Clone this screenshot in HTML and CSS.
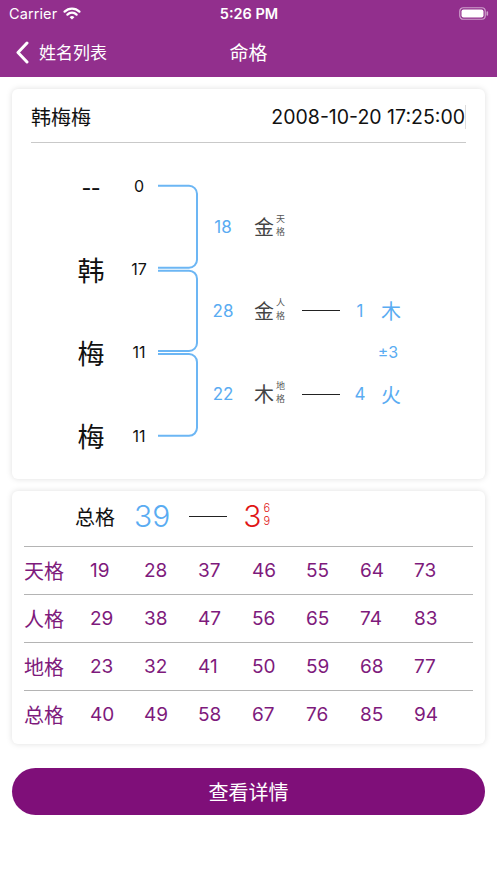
FILE: index.html
```html
<!DOCTYPE html>
<html lang="zh">
<head>
<meta charset="utf-8">
<title>命格</title>
<link rel="stylesheet" href="styles.css">
</head>
<body>
<header class="topbar">
  <div class="status">
    <div class="st-left">
      <span class="carrier">Carrier</span>
      <svg class="wifi" width="18" height="14" viewBox="0 0 18 14">
        <path d="M1.6 5.6 A10.5 10.5 0 0 1 16.4 5.6" stroke="#fff" stroke-width="2.3" fill="none" stroke-linecap="round"/>
        <path d="M4.4 8.6 A6.5 6.5 0 0 1 13.6 8.6" stroke="#fff" stroke-width="2.3" fill="none" stroke-linecap="round"/>
        <path d="M9 13.6 L6.6 11.2 A3.4 3.4 0 0 1 11.4 11.2 Z" fill="#fff"/>
      </svg>
    </div>
    <div class="st-time">5:26 PM</div>
    <div class="st-right">
      <svg width="30" height="13" viewBox="0 0 30 13">
        <rect x="0.75" y="0.75" width="25.5" height="11.5" rx="3.5" fill="none" stroke="rgba(255,255,255,0.55)" stroke-width="1.2"/>
        <rect x="2.5" y="2.5" width="22" height="8" rx="2" fill="#fff"/>
        <rect x="27.5" y="4.3" width="1.6" height="4.4" rx="0.8" fill="rgba(255,255,255,0.55)"/>
      </svg>
    </div>
  </div>
  <nav class="nav">
    <div class="back">
      <svg width="14" height="23" viewBox="0 0 14 23">
        <polyline points="12,2 3,11.5 12,21" stroke="#fff" stroke-width="3" fill="none" stroke-linecap="round" stroke-linejoin="round"/>
      </svg>
      <span>姓名列表</span>
    </div>
    <div class="title">命格</div>
    <div></div>
  </nav>
</header>

<main class="page">
  <section class="card card-main">
    <div class="info">
      <span class="name">韩梅梅</span>
      <span class="date">2008-10-20 17:25:00</span>
    </div>
    <div class="diagram">
      <div class="ch r1">--</div><div class="sn r1">0</div>
      <div class="ch r3">韩</div><div class="sn r3">17</div>
      <div class="ch r5">梅</div><div class="sn r5">11</div>
      <div class="ch r7">梅</div><div class="sn r7">11</div>

      <svg class="brackets" width="43" height="292" viewBox="0 0 43 292">
        <path d="M1 20.8 H32 A8 8 0 0 1 40 28.8 V94.7 A8 8 0 0 1 32 102.7 H1" fill="none" stroke="#6cb6f4" stroke-width="2"/>
        <path d="M1 105.7 H32 A8 8 0 0 1 40 113.7 V178 A8 8 0 0 1 32 186 H1" fill="none" stroke="#6cb6f4" stroke-width="2"/>
        <path d="M1 189 H32 A8 8 0 0 1 40 197 V262.8 A8 8 0 0 1 32 270.8 H1" fill="none" stroke="#6cb6f4" stroke-width="2"/>
      </svg>

      <div class="bn r2">18</div>
      <div class="el r2"><span class="elc">金</span><span class="elt"><span>天</span><span>格</span></span></div>

      <div class="bn r4">28</div>
      <div class="el r4"><span class="elc">金</span><span class="elt"><span>人</span><span>格</span></span></div>
      <div class="dash r4"><i></i></div>
      <div class="rn r4">1</div>
      <div class="re r4">木</div>

      <div class="pm r5">±3</div>

      <div class="bn r6">22</div>
      <div class="el r6"><span class="elc">木</span><span class="elt"><span>地</span><span>格</span></span></div>
      <div class="dash r6"><i></i></div>
      <div class="rn r6">4</div>
      <div class="re r6">火</div>
    </div>
  </section>

  <section class="card card-table">
    <div class="zhead">
      <span class="zlabel">总格</span>
      <span class="zval">39</span>
      <i class="zdash"></i>
      <span class="zred">3<span class="zsup"><span>6</span><span>9</span></span></span>
    </div>
    <div class="trow"><span class="tl">天格</span><span>19</span><span>28</span><span>37</span><span>46</span><span>55</span><span>64</span><span>73</span></div>
    <div class="trow"><span class="tl">人格</span><span>29</span><span>38</span><span>47</span><span>56</span><span>65</span><span>74</span><span>83</span></div>
    <div class="trow"><span class="tl">地格</span><span>23</span><span>32</span><span>41</span><span>50</span><span>59</span><span>68</span><span>77</span></div>
    <div class="trow"><span class="tl">总格</span><span>40</span><span>49</span><span>58</span><span>67</span><span>76</span><span>85</span><span>94</span></div>
  </section>

  <button class="detail">查看详情</button>
</main>
</body>
</html>
```
FILE: styles.css
```css
* { box-sizing: border-box; }
html, body { margin: 0; padding: 0; }
body {
  width: 497px;
  min-height: 883px;
  background: #fff;
  font-family: Inter, "Noto Sans CJK SC", sans-serif;
  color: #111;
}

.topbar { background: #922f8d; color: #fff; }
.status {
  height: 26px;
  display: grid;
  grid-template-columns: 1fr auto 1fr;
  align-items: center;
  padding: 0 8px 0 9px;
}
.st-left { display: flex; align-items: center; gap: 6px; }
.carrier { font-size: 14.5px; letter-spacing: 0.1px; }
.wifi { margin-top: -1px; }
.st-time { font-size: 14.5px; font-weight: 600; }
.st-right { display: flex; justify-content: flex-end; }

.nav {
  height: 51px;
  display: grid;
  grid-template-columns: 1fr auto 1fr;
  align-items: center;
  padding: 0 15px;
}
.back { display: flex; align-items: center; gap: 10px; font-size: 17px; font-family: "Noto Sans CJK SC", sans-serif; }
.back svg { margin-top: 1px; }
.title { font-size: 19px; font-family: "Noto Sans CJK SC", sans-serif; }

.page { padding: 12px 12px 0; display: flex; flex-direction: column; }

.card {
  background: #fff;
  border-radius: 6px;
  box-shadow: 0 0 6px rgba(0, 0, 0, 0.13);
}
.card-main { height: 390px; padding: 0 19px 0 18px; }
.info {
  height: 54px;
  display: flex;
  align-items: center;
  justify-content: space-between;
  border-bottom: 1px solid #c9c9c9;
  margin: 0 0 0 1px;
  padding-top: 2px;
}
.name { font-family: "Noto Sans CJK SC", sans-serif; font-size: 20px; color: #111; }
.date { font-size: 19.5px; color: #111; border-right: 1px solid #ddd; line-height: 24px; }

.diagram {
  display: grid;
  grid-template-columns: 42px 45px 43px 46px 50px 50px 28px 34px;
  grid-template-rows: repeat(7, 41.67px);
  margin: 22px 0 0 40px;
}
.diagram > div { display: flex; align-items: center; justify-content: center; }
.r1 { grid-row: 1; } .r2 { grid-row: 2; } .r3 { grid-row: 3; } .r4 { grid-row: 4; }
.r5 { grid-row: 5; } .r6 { grid-row: 6; } .r7 { grid-row: 7; }

.ch { grid-column: 1; font-family: "Noto Sans CJK SC", sans-serif; font-size: 27px; color: #111; }
.sn { grid-column: 2; padding-left: 9px; font-size: 16px; color: #111; }
.brackets { grid-column: 3; grid-row: 1 / 8; }
.bn { grid-column: 4; font-size: 17px; color: #5aacf2; }
.diagram > .el { grid-column: 5; justify-content: flex-start; padding-left: 8px; }
.elc { font-family: "Noto Sans CJK SC", sans-serif; font-size: 20px; line-height: 24px; color: #444; }
.elt {
  display: flex;
  flex-direction: column;
  font-family: "Noto Sans CJK SC", sans-serif;
  font-size: 9px;
  line-height: 13.2px;
  color: #555;
  margin-left: 2px;
  margin-top: -4px;
}
.dash { grid-column: 6; }
.dash i { display: block; width: 38px; border-top: 1.5px solid #222; }
.rn { grid-column: 7; font-size: 17px; color: #5aacf2; }
.re { grid-column: 8; font-family: "Noto Sans CJK SC", sans-serif; font-size: 20px; color: #5aacf2; }
.diagram > .pm { grid-column: 8; font-size: 16px; color: #5aacf2; padding-right: 6px; }

.card-table { margin-top: 12px; height: 253px; padding: 0 12px; }
.zhead { height: 55px; display: flex; align-items: center; padding: 0 0 5px 51px; gap: 19px; }
.zlabel { font-family: "Noto Sans CJK SC", sans-serif; font-size: 20px; color: #111; }
.zval { font-size: 30px; color: #5aacf2; font-weight: 300; }
.zdash { display: block; width: 38px; border-top: 1.5px solid #222; }
.zred { font-size: 30px; color: #e01515; display: flex; align-items: center; font-weight: 300; margin-left: -3px; }
.zsup {
  display: flex;
  flex-direction: column;
  font-size: 11px;
  line-height: 13.5px;
  margin-left: 2px;
  margin-top: -2px;
}
.trow {
  height: 48px;
  border-top: 1px solid #b4b4b4;
  display: grid;
  grid-template-columns: 66px repeat(7, 54px);
  align-items: center;
  font-size: 19px;
  color: #7e1a7c;
}
.tl { font-family: "Noto Sans CJK SC", sans-serif; font-size: 20px; }

.detail {
  margin-top: 24px;
  height: 47px;
  border: none;
  border-radius: 24px;
  background: #7f0f79;
  color: #fff;
  font-family: "Noto Sans CJK SC", sans-serif;
  font-size: 20px;
  padding: 0;
}
```
